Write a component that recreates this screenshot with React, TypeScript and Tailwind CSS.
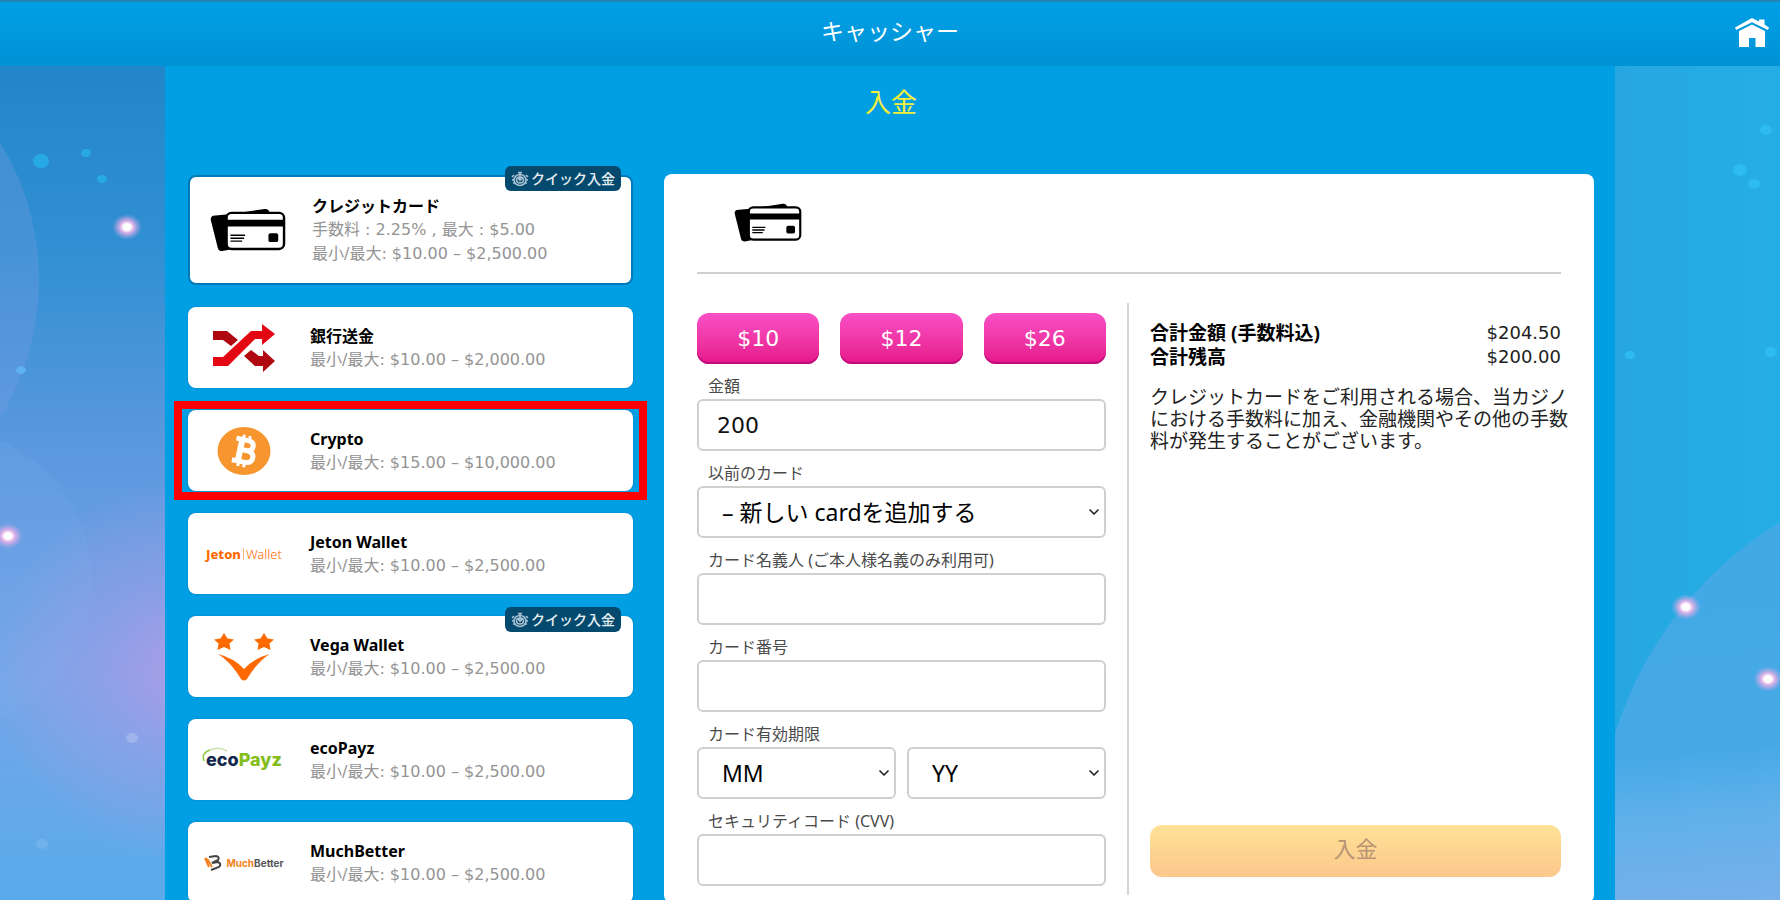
import type {ReactNode} from "react";
import {ChevronDown} from "lucide-react";

type Method = {
  name: string
  limits: string
  fee?: string
  logo: ReactNode
  quick?: boolean
  selected?: boolean
  highlighted?: boolean
}

const AMOUNTS = ["$10", "$12", "$26"];

const METHODS: Method[] = [
  { name: "クレジットカード", fee: "手数料 : 2.25% , 最大 : $5.00", limits: "最小/最大: $10.00 – $2,500.00", logo: <CardsIcon className="ml-1 w-[78px]"/>, quick: true, selected: true },
  { name: "銀行送金", limits: "最小/最大: $10.00 – $2,000.00", logo: <TransferLogo/> },
  { name: "Crypto", limits: "最小/最大: $15.00 – $10,000.00", logo: <BitcoinLogo/>, highlighted: true },
  { name: "Jeton Wallet", limits: "最小/最大: $10.00 – $2,500.00", logo: <JetonLogo/> },
  { name: "Vega Wallet", limits: "最小/最大: $10.00 – $2,500.00", logo: <VegaLogo/>, quick: true },
  { name: "ecoPayz", limits: "最小/最大: $10.00 – $2,500.00", logo: <EcoPayzLogo/> },
  { name: "MuchBetter", limits: "最小/最大: $10.00 – $2,500.00", logo: <MuchBetterLogo/> },
];

export default function App() {
  return (
    <div className="relative flex h-screen flex-col overflow-hidden bg-[#29a9e1] font-['Noto_Sans','Noto_Sans_CJK_JP',sans-serif] text-black">
      <Backdrop/>
      <Header/>
      <main className="relative min-h-0 flex-1 overflow-y-auto [scrollbar-width:none]">
        <div className="mx-auto min-h-full max-w-[1450px] bg-[#009fe3] pr-[21px] pb-6 pl-[23px]">
          <h2 className="pt-5 pb-14 text-center text-[26px] leading-[32px] text-[#f4ee3c]">入金</h2>
          <div className="flex gap-[31px]">
            <MethodList/>
            <DepositPanel/>
          </div>
        </div>
      </main>
    </div>
  )
}

function Header() {
  return (
    <header className="relative flex h-[66px] shrink-0 items-center justify-center border-t-2 border-[#2583b4] bg-linear-to-b from-[#00a0e6] to-[#0092d5] pb-1.5">
      <h1 className="text-[23px] text-white">キャッシャー</h1>
      <a href="#" aria-label="Home" className="absolute right-[11px] top-4">
        <svg viewBox="0 0 34 30" className="h-[30px] w-[34px]" fill="#fff">
          <path d="M17 0 L24 3.6 V1.500 H29.500 V6.500 L34 9.500 L33 12 L17 4.300 L1 12 L0 9.500 Z"/>
          <path d="M17 6.500 L30 13 V29 H20.500 V20 H14 V29 H4 V13 Z"/>
        </svg>
      </a>
    </header>
  )
}

function MethodList() {
  return (
    <ul className="w-[445px] shrink-0 space-y-[22px] pt-px">
      {METHODS.map((method) => (
        <li key={method.name} className="relative">
          <button
            className={
              method.selected
                ? "flex h-[110px] w-full items-center gap-[26px] rounded-lg border-2 border-[#0079b8] bg-white pl-4 text-left"
                : "flex h-[81px] w-full items-center gap-[26px] rounded-lg bg-white pl-4 text-left shadow-[0_0_2px_#0079b8]"
            }
          >
            <span className="flex w-20 shrink-0 items-center justify-center">{method.logo}</span>
            <span className="block leading-6">
              <span className="block text-base leading-6 font-bold">{method.name}</span>
              {method.fee && <MutedLine text={method.fee}/>}
              <MutedLine text={method.limits}/>
            </span>
          </button>
          {method.quick && <QuickBadge/>}
          {method.highlighted && (
            <div className="pointer-events-none absolute -inset-x-3.5 -inset-y-[9px] border-8 border-[#ff0000]"/>
          )}
        </li>
      ))}
    </ul>
  )
}

function MutedLine({ text }: { text: string }) {
  return (
    <span className="block font-['DejaVu_Sans','Noto_Sans_CJK_JP',sans-serif] text-base leading-6 text-[#949494]">
      {text}
    </span>
  )
}

function QuickBadge() {
  return (
    <span className="absolute -top-[9px] right-3 flex h-[25px] items-center gap-0.5 rounded-md bg-[#044a6e] px-1.5 text-sm leading-5 font-medium text-[#e6eef3]">
      <svg viewBox="0 0 18 16" className="h-4 w-[18px]" fill="none" stroke="#a9c4d4" strokeWidth="1.500">
        <ellipse cx="9" cy="9" rx="6" ry="5.500"/>
        <ellipse cx="9" cy="9" rx="3.500" ry="3"/>
        <path d="M7 1.500 h4 M9 1.500 V8 M7 7 L9 9.500 L12 6.500 M1 6 L3 4 M17 6 L15 4 M1 9 h2 M15 9 h2 M2 12 h2 M14 12 h2"/>
      </svg>
      クイック入金
    </span>
  )
}

function DepositPanel() {
  return (
    <section className="min-w-0 flex-1 rounded-lg bg-white px-[33px]">
      <div className="flex h-[100px] items-center border-b-2 border-[#cfcfcf] pl-[37px]">
        <CardsIcon className="w-[68px]"/>
      </div>
      <form className="mt-[29px] grid grid-cols-2">
        <div className="border-r-2 border-[#d6d6d6] pt-2.5 pr-[21px] pb-[9px]">
          <div className="grid grid-cols-3 gap-[21px]">
            {AMOUNTS.map((amount) => (
              <button
                key={amount}
                type="button"
                className="h-[51px] rounded-xl bg-linear-to-b from-[#f94fc6] to-[#e6138a] font-['DejaVu_Sans',sans-serif] text-[22px] text-white shadow-[inset_0_-2px_0_#c00c78]"
              >
                {amount}
              </button>
            ))}
          </div>
          <TextField id="amount" label="金額" value="200"/>
          <Field id="saved-card" label="以前のカード">
            <Select id="saved-card" label="以前のカード" option="– 新しい cardを追加する"/>
          </Field>
          <TextField id="holder" label="カード名義人 (ご本人様名義のみ利用可)"/>
          <TextField id="number" label="カード番号"/>
          <Field id="month" label="カード有効期限">
            <div className="grid grid-cols-2 gap-[11px]">
              <Select id="month" label="MM" option="MM"/>
              <Select id="year" label="YY" option="YY"/>
            </div>
          </Field>
          <TextField id="cvv" label="セキュリティコード (CVV)"/>
        </div>
        <Summary/>
      </form>
    </section>
  )
}

function Field({ id, label, children }: { id: string, label: string, children: ReactNode }) {
  return (
    <div className="pt-[11px]">
      <label htmlFor={id} className="mb-0.5 block pl-[11px] text-base leading-[22px] text-[#4a4a4a]">{label}</label>
      {children}
    </div>
  )
}

function TextField({ id, label, value }: { id: string, label: string, value?: string }) {
  return (
    <Field id={id} label={label}>
      <input
        id={id}
        type="text"
        defaultValue={value}
        className="block h-[52px] w-full rounded-md border-2 border-[#cfcfcf] bg-white px-[18px] font-['DejaVu_Sans','Noto_Sans_CJK_JP',sans-serif] text-[22px] text-[#111]"
      />
    </Field>
  )
}

function Select({ id, label, option }: { id: string, label: string, option: string }) {
  return (
    <div className="relative">
      <select
        id={id}
        aria-label={label}
        className="block h-[52px] w-full appearance-none rounded-md border-2 border-[#cfcfcf] bg-white pr-7 pl-[23px] text-[23px] text-black"
      >
        <option>{option}</option>
      </select>
      <ChevronDown className="pointer-events-none absolute top-[18px] right-1 size-4 text-[#222]" strokeWidth={2.500}/>
    </div>
  )
}

function Summary() {
  return (
    <div className="flex flex-col pt-[18px] pb-[18px] pl-[21px] text-[19px] leading-6">
      <dl>
        <div className="flex justify-between">
          <dt className="font-bold">合計金額 (手数料込)</dt>
          <dd className="font-['DejaVu_Sans',sans-serif] text-lg leading-6 text-[#222]">$204.50</dd>
        </div>
        <div className="flex justify-between">
          <dt className="font-bold">合計残高</dt>
          <dd className="font-['DejaVu_Sans',sans-serif] text-lg leading-6 text-[#222]">$200.00</dd>
        </div>
      </dl>
      <p className="mt-[17px] -mr-2 leading-[22px] text-[#222]">
        クレジットカードをご利用される場合、当カジノにおける手数料に加え、金融機関やその他の手数料が発生することがございます。
      </p>
      <button type="submit" disabled className="mt-auto h-[52px] rounded-xl bg-linear-to-b from-[#fee296] to-[#fcc78c] pb-1.5 text-[22px] text-[#b79473]">
        入金
      </button>
    </div>
  )
}

/* Logos */

function CardsIcon({ className }: { className: string }) {
  return (
    <svg viewBox="0 0 78 46" className={className}>
      <path d="M3 8 L24 6 L56 1 Q60 0.500 61 4 L62 8 L24 42 L14 44 Q9 45 8 41 L1 13 Q0 9 3 8 Z" fill="#000"/>
      <rect x="17" y="5" width="59" height="37" rx="5" fill="#fff" stroke="#000" strokeWidth="2.500"/>
      <path d="M17 12 H76 V19 H17 Z" fill="#000"/>
      <path d="M21 28 H36 M21 31 H35 M21 34 H33" stroke="#000" strokeWidth="1.500"/>
      <rect x="60" y="26" width="10" height="9" rx="2" fill="#000"/>
    </svg>
  )
}

function TransferLogo() {
  return (
    <svg viewBox="0 0 62 48" className="h-12 w-[62px]">
      <path d="M0 7 H14 L25 16 L18 22 L10 16 H0 Z M38 26 L46 32 H50 V26 L62 37 L50 48 V42 H42 L31 32 Z" fill="#b00810"/>
      <path d="M0 33 H10 L38 7 H49 V0 L62 10 L49 21 V15 H42 L15 42 H0 Z" fill="#e30613"/>
    </svg>
  )
}

function BitcoinLogo() {
  return (
    <svg viewBox="0 0 54 48" className="h-12 w-[54px]">
      <ellipse cx="27" cy="24" rx="26.500" ry="24" fill="#f7962f"/>
      <g transform="rotate(12 27 24)" fill="none" stroke="#fff">
        <path d="M17 13 H29 Q35 13 35 18 Q35 23 29 23 H21 M29 23 Q37 23 37 29 Q37 35 29 35 H17" strokeWidth="5"/>
        <path d="M23 13 V35" strokeWidth="6"/>
        <path d="M24 8 V12 M30 8 V12 M24 36 V40 M30 36 V40" strokeWidth="3"/>
      </g>
    </svg>
  )
}

function JetonLogo() {
  return (
    <span className="flex items-center text-[13px] leading-4 text-[#ff6a00]">
      <b className="font-extrabold">Jeton</b>
      <span className="mx-0.5 h-3 w-px bg-[#ffb380]"/>
      <span className="font-light">Wallet</span>
    </span>
  )
}

function VegaLogo() {
  return (
    <svg viewBox="0 0 60 48" className="h-12 w-[60px]" fill="#ff6a00">
      <path d="M10 0 L13.500 5.500 L20 6.500 L15.500 10.500 L16.500 17 L10 14 L3.500 17 L4.500 10.500 L0 6.500 L6.500 5.500 Z"/>
      <path d="M50 0 L53.500 5.500 L60 6.500 L55.500 10.500 L56.500 17 L50 14 L43.500 17 L44.500 10.500 L40 6.500 L46.500 5.500 Z"/>
      <path d="M4 21 Q20 25 30 36 Q40 25 56 21 Q44 28 33 46 Q30 49 27 46 Q16 28 4 21 Z"/>
    </svg>
  )
}

function EcoPayzLogo() {
  return (
    <span className="relative font-[Inter,sans-serif] text-lg leading-6 font-extrabold">
      <svg viewBox="0 0 28 16" className="absolute -top-0.5 -left-1 h-4 w-7" fill="none" stroke="#8cc63f" strokeWidth="1.500">
        <path d="M2 15 Q-1 7 8 4"/>
        <path d="M8 4 Q17 0 25 5" stroke="#cfe3b0"/>
      </svg>
      <span className="text-[#12284c]">eco</span>
      <span className="text-[#84bd1c]">Payz</span>
    </span>
  )
}

function MuchBetterLogo() {
  return (
    <span className="flex items-center gap-1 font-[Inter,sans-serif] text-[10px] leading-4 font-bold">
      <svg viewBox="0 0 18 16" className="h-4 w-[18px]" fill="none" strokeWidth="2">
        <path d="M1 3 L5 12 M1 3 L4 5 L8 12" stroke="#f58220"/>
        <path d="M5 2 L12 1 Q16 2 14 5 L8 8 L14 7 Q18 9 15 12 L7 15" stroke="#444"/>
      </svg>
      <span>
        <span className="text-[#f58220]">Much</span>
        <span className="text-[#555]">Better</span>
      </span>
    </span>
  )
}

/* Night-sky artwork behind the page */

const SPARKLES = [[127, 227], [8, 536], [1686, 607], [1768, 679]];

const DOTS = [
  [41, 161, 8, "#27a9e6"], [86, 153, 5, "#27a9e6"], [102, 179, 5, "#27a9e6"], [21, 370, 5, "#5fb0ee"],
  [132, 738, 6, "#9fb4ec"], [42, 844, 6, "#6fb2ec"], [1766, 130, 6, "#2ebcf0"], [1740, 170, 7, "#2ebcf0"],
  [1754, 184, 6, "#2ebcf0"], [1630, 355, 5, "#2ebcf0"], [1771, 352, 6, "#2ebcf0"],
] as const;

function Backdrop() {
  return (
    <svg viewBox="0 0 1780 900" preserveAspectRatio="none" className="absolute inset-0 h-full w-full" aria-hidden="true">
      <defs>
        <linearGradient id="left" x1="0" y1="0" x2="0" y2="1">
          <stop offset="0.070" stopColor="#2385c9"/>
          <stop offset="0.280" stopColor="#3190d3"/>
          <stop offset="0.500" stopColor="#5c98de"/>
          <stop offset="0.750" stopColor="#74a5e8"/>
          <stop offset="1" stopColor="#5aabea"/>
        </linearGradient>
        <radialGradient id="haze" gradientUnits="userSpaceOnUse" cx="185" cy="670" r="190">
          <stop offset="0" stopColor="#b49ce6" stopOpacity="0.900"/>
          <stop offset="0.500" stopColor="#a49ce6" stopOpacity="0.450"/>
          <stop offset="1" stopColor="#b49ce6" stopOpacity="0"/>
        </radialGradient>
        <linearGradient id="right" x1="0" y1="0" x2="1" y2="0">
          <stop offset="0" stopColor="#27a6e0"/>
          <stop offset="1" stopColor="#25aee5"/>
        </linearGradient>
        <linearGradient id="hill" gradientUnits="userSpaceOnUse" x1="1660" y1="520" x2="1700" y2="910">
          <stop offset="0" stopColor="#41a9e5"/>
          <stop offset="0.600" stopColor="#46a9e6"/>
          <stop offset="0.750" stopColor="#5fb0ea"/>
          <stop offset="1" stopColor="#78b0ec"/>
        </linearGradient>
        <radialGradient id="spark">
          <stop offset="0.250" stopColor="#fff"/>
          <stop offset="0.450" stopColor="#f0b4e8" stopOpacity="0.900"/>
          <stop offset="1" stopColor="#b9a0e8" stopOpacity="0"/>
        </radialGradient>
      </defs>
      <rect width="890" height="900" fill="url(#left)"/>
      <circle cx="-224" cy="280" r="263" fill="#7d9be0" fillOpacity="0.300"/>
      <circle cx="-60" cy="580" r="152" fill="#7fb4f0" fillOpacity="0.150"/>
      <rect width="890" height="900" fill="url(#haze)"/>
      <rect x="1600" width="180" height="900" fill="url(#right)"/>
      <circle cx="1977" cy="846" r="379" fill="url(#hill)"/>
      {DOTS.map(([x, y, r, fill]) => (
        <ellipse key={`${x}-${y}`} cx={x} cy={y} rx={r} ry={r - 1} fill={fill}/>
      ))}
      {SPARKLES.map(([x, y]) => (
        <ellipse key={`${x}-${y}`} cx={x} cy={y} rx="15" ry="13" fill="url(#spark)"/>
      ))}
    </svg>
  )
}
